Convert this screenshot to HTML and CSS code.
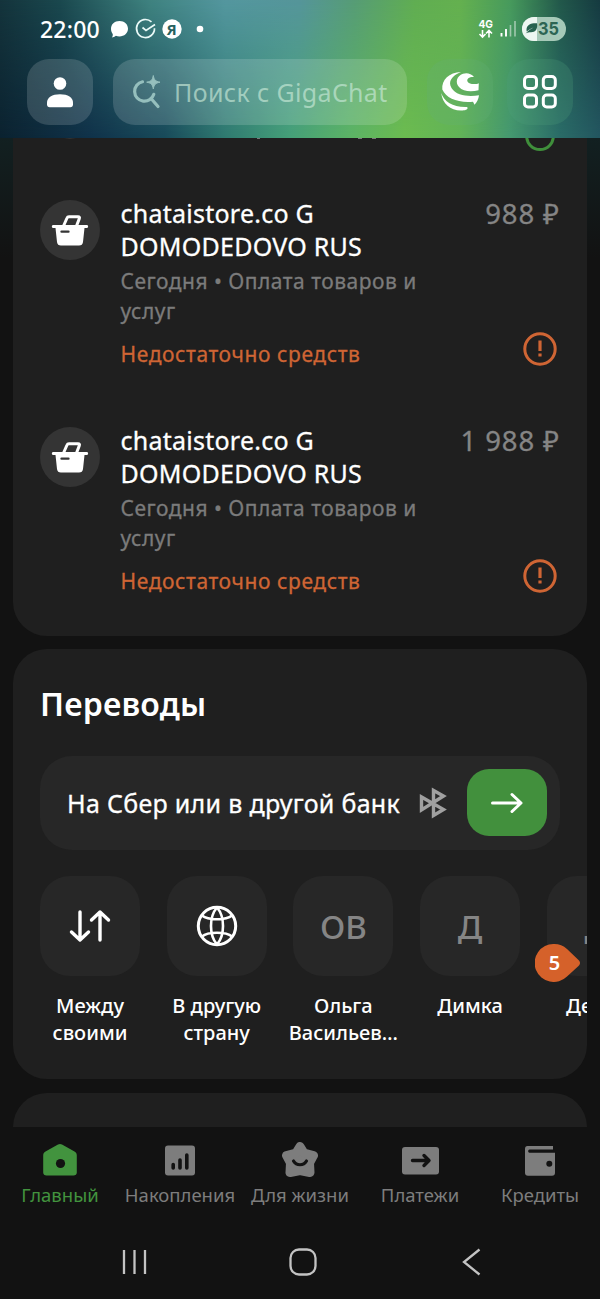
FILE: index.html
```html
<!DOCTYPE html>
<html lang="ru">
<head>
<meta charset="utf-8">
<title>Главный</title>
<link rel="stylesheet" href="styles.css">
</head>
<body>
<header class="header">
  <div class="status">
    <span class="clock">22:00</span>
    <svg class="status-icons" width="100" height="24" viewBox="110 17 100 24">
      <path d="M119.500 21c5 0 8.500 3.400 8.500 7.700 0 4.400-3.700 7.700-8.500 7.700-1.500 0-2.600-.2-3.600-.6-1.500 1.100-2.600 1.700-4.100 1.700.9-1.200 1.200-2.500.9-3.600-1.100-1.400-1.700-3.200-1.700-5.200 0-4.300 3.500-7.700 8.500-7.700z" fill="#fff"/>
      <path d="M151.500 21.800a9 9 0 1 0 3 6.500M142.500 27.500l3.500 3 9-6" fill="none" stroke="#eafaf8" stroke-width="1.700"/>
      <circle cx="172" cy="29" r="9.700" fill="#fff"/>
      <text x="171.500" y="34.500" text-anchor="middle" class="ya">Я</text>
      <circle cx="200" cy="29" r="3.300" fill="#fff"/>
    </svg>
    <svg class="signal" width="90" height="28" viewBox="477 15 90 28">
      <text x="478.500" y="27.500" class="g4" textLength="14.500" lengthAdjust="spacingAndGlyphs">4G</text>
      <path d="M482.500 30v7m-3-3 3 3.200 3-3.200M489 37.500v-7m-3 3 3-3.200 3 3.200" fill="none" stroke="#fff" stroke-width="1.600"/>
      <path d="M501.500 33v3.500M506 29v7.500" stroke="#fff" stroke-width="1.900"/>
      <path d="M510.500 25v11.500M515 21v15.500" stroke="#a1c9ae" stroke-width="1.600"/>
      <clipPath id="pill"><rect x="522" y="17" width="44" height="24" rx="12"/></clipPath>
      <g clip-path="url(#pill)"><path d="M522 17h44v24h-44z" fill="#a6c9b8"/><path d="M522 17h15v24h-15z" fill="#edf6f1"/></g>
      <path d="M525.500 33.500c2-1 3.500-1.200 5.500-1.200 4.500 0 7-3.300 6-9-6-.3-10.500 1.500-10.500 6.500 0 .8.100 1.300.3 1.800 2-2.200 4-3.200 6.700-4.200-3 1.500-5.500 3.300-8 6.100z" fill="#27624f"/>
      <text x="538" y="35.400" class="batt" textLength="21" lengthAdjust="spacingAndGlyphs">35</text>
    </svg>
  </div>
  <div class="toolbar">
    <div class="tool tool-user">
      <svg width="66" height="66" viewBox="27 59 66 66"><circle cx="60" cy="83.500" r="6.300" fill="#fff"/><path d="M47 102.500c0-4.800 5-8.200 13-8.200s13 3.400 13 8.200v2c0 1.600-1 2.700-2.700 2.700H49.700c-1.700 0-2.700-1.100-2.700-2.700z" fill="#fff"/></svg>
    </div>
    <div class="search">
      <svg width="30" height="34" viewBox="132 74 30 34"><path d="M142.500 80.800a9.800 9.800 0 1 0 11.300 12.500M151.500 98l6.500 7.500" fill="none" stroke="#95bfbd" stroke-width="3.200" stroke-linecap="round"/><path d="M153.300 74.500c.9 4.600 2 5.700 6.700 6.700-4.700 1-5.800 2.100-6.700 6.700-.9-4.600-2-5.700-6.600-6.700 4.600-1 5.700-2.100 6.600-6.700z" fill="#95bfbd" stroke="#95bfbd"/></svg>
      <span class="placeholder">Поиск с GigaChat</span>
    </div>
    <div class="tool tool-giga">
      <svg width="66" height="66" viewBox="427 59 66 66">
        <g fill="#fff">
          <path d="M461 72C449 72.300 441.500 80 442.300 89.500c4 9 15.700 13.500 30.700 12.200l1.500 3c2.500-2.500 4-5.700 4.500-9.400-9 1.300-22.500 1.200-27.500-7.300-4-6.500.5-12.500 9.500-16z"/>
          <path d="M474 77c-3-4-7.500-4.500-11-3.300-6.500 2.300-8 8.800-4 13.300s12 5 19.500 3.200l.3-7c-3.300 1.500-9.800 1.300-11.300-1.700-1-2.500 1.500-4.700 6.500-4.500z"/>
          <path d="M441.200 93c3 9 12 14.500 25.800 14 1.500 1.500 0 3-3 3.300-12 1.500-21.500-5.500-22.800-17.300z"/>
        </g>
      </svg>
    </div>
    <div class="tool tool-apps">
      <svg width="66" height="66" viewBox="507 59 66 66"><g fill="none" stroke="#fff" stroke-width="3"><rect x="524.500" y="76.500" width="12" height="12" rx="3.500"/><rect x="543.300" y="76.500" width="12" height="12" rx="3.500"/><rect x="524.500" y="95" width="12" height="12" rx="3.500"/><rect x="543.300" y="95" width="12" height="12" rx="3.500"/></g></svg>
    </div>
  </div>
</header>

<main class="feed">
  <section class="card history">
    <svg class="cut-row" width="574" height="20" viewBox="13 138 574 20"><circle cx="540" cy="136.300" r="13.300" fill="none" stroke="#3f8f3b" stroke-width="3"/><path d="M64 138h12l-6 .9z" fill="#333"/><path d="M257 138.500h3M358 138.500h4M372 138.500h4" stroke="#777"/></svg>
    <article class="tx">
      <svg class="tx-icon" width="60" height="60" viewBox="0 0 60 60"><circle cx="30" cy="30" r="30" fill="#343434"/><path d="M13 25h34c1.500 0 1.500 3 0 3h-2.500l-1.500 14c-.3 2.500-1.600 3.500-4 3.500H21c-2.400 0-3.700-1-4-3.500L15.500 28H13c-1.500 0-1.500-3 0-3z" fill="#fff"/><path d="M23.500 26l3.500-8c.4-1 1-1.300 2-1.300h9c1.400 0 1.800.9 1.300 2L36.500 26" fill="none" stroke="#fff" stroke-width="3"/><path d="M21.500 31.700h7" stroke="#343434" stroke-width="2.300" stroke-linecap="round"/></svg>
      <div class="tx-text">
        <div class="tx-title">chataistore.co G<br>DOMODEDOVO RUS</div>
        <div class="tx-sub">Сегодня • Оплата товаров и<br>услуг</div>
        <div class="tx-error">Недостаточно средств</div>
      </div>
      <div class="tx-side">
        <span class="sum">988 ₽</span>
        <svg width="36" height="36" viewBox="0 0 36 36"><circle cx="18" cy="18" r="15.200" fill="none" stroke="#cf6534" stroke-width="3"/><path d="M18 9.500v10.500M18 22.500v3" stroke="#cf6534" stroke-width="3.200"/></svg>
      </div>
    </article>
    <article class="tx">
      <svg class="tx-icon" width="60" height="60" viewBox="0 0 60 60"><circle cx="30" cy="30" r="30" fill="#343434"/><path d="M13 25h34c1.500 0 1.500 3 0 3h-2.500l-1.500 14c-.3 2.500-1.600 3.500-4 3.500H21c-2.400 0-3.700-1-4-3.500L15.500 28H13c-1.500 0-1.500-3 0-3z" fill="#fff"/><path d="M23.500 26l3.500-8c.4-1 1-1.300 2-1.300h9c1.400 0 1.800.9 1.300 2L36.500 26" fill="none" stroke="#fff" stroke-width="3"/><path d="M21.500 31.700h7" stroke="#343434" stroke-width="2.300" stroke-linecap="round"/></svg>
      <div class="tx-text">
        <div class="tx-title">chataistore.co G<br>DOMODEDOVO RUS</div>
        <div class="tx-sub">Сегодня • Оплата товаров и<br>услуг</div>
        <div class="tx-error">Недостаточно средств</div>
      </div>
      <div class="tx-side">
        <span class="sum">1 988 ₽</span>
        <svg width="36" height="36" viewBox="0 0 36 36"><circle cx="18" cy="18" r="15.200" fill="none" stroke="#cf6534" stroke-width="3"/><path d="M18 9.500v10.500M18 22.500v3" stroke="#cf6534" stroke-width="3.200"/></svg>
      </div>
    </article>
  </section>

  <section class="card transfers">
    <h2 class="heading">Переводы</h2>
    <div class="bank">
      <span class="bank-label">На Сбер или в другой банк</span>
      <svg width="28" height="32" viewBox="419 787 28 32"><path d="M421.500 797v13l22-14-10-5.500v25l10-6z" fill="none" stroke="#a0a0a0" stroke-width="3.400"/></svg>
      <div class="go"><svg width="34" height="24" viewBox="0 0 34 24"><path d="M2.500 12h28M22 3.500l9 8.500-9 8.500" fill="none" stroke="#fff" stroke-width="3" stroke-linecap="round" stroke-linejoin="round"/></svg></div>
    </div>
    <div class="contacts">
      <div class="contact"><div class="tile"><svg width="44" height="44" viewBox="0 0 44 44"><path d="M12 8v28M3.500 28l8.500 8 8.500-8M32 36V8M23.500 16l8.500-8 8.500 8" fill="none" stroke="#fff" stroke-width="3.400" stroke-linecap="round" stroke-linejoin="round"/></svg></div><span>Между<br>своими</span></div>
      <div class="contact"><div class="tile"><svg width="44" height="44" viewBox="0 0 44 44"><g fill="none" stroke="#fff"><circle cx="22" cy="22" r="18.700" stroke-width="3"/><path d="M22 3.500c-8 9-8 28 0 37M22 3.500c8 9 8 28 0 37M7 11.500c6 5 24 5 30 0M7 32.500c6-5 24-5 30 0" stroke-width="2.600"/></g></svg></div><span>В другую<br>страну</span></div>
      <div class="contact"><div class="tile">ОВ</div><span>Ольга<br>Васильев…</span></div>
      <div class="contact"><div class="tile">Д</div><span>Димка</span></div>
      <div class="contact"><div class="tile">Д</div><span>Денис</span></div>
    </div>
    <svg class="pin" width="46" height="38" viewBox="535 944 46 38"><path d="M554 944a19 19 0 1 0 13 32.500l11.500-10.500c2-1.800 2-4.200 0-6L567 949a19 19 0 0 0-13-5z" fill="#d5612a"/><text x="554.500" y="969.800" text-anchor="middle" class="pin-num">5</text></svg>
  </section>

  <section class="card next"></section>
</main>

<nav class="tabs">
  <div class="tab active"><svg width="40" height="40" viewBox="0 0 40 40"><path d="M18 3.500c1.500-.8 2.500-.8 4 0l12.500 7c1.500.8 2.300 2 2.300 4v17c0 2-1.300 3-3.300 3h-27c-2 0-3.300-1-3.300-3v-17c0-2 .8-3.200 2.300-4z" fill="#42933e"/><circle cx="20.500" cy="22.500" r="4.600" fill="#121212"/></svg><span>Главный</span></div>
  <div class="tab"><svg width="40" height="40" viewBox="0 0 40 40"><rect x="5" y="4.500" width="30" height="30" rx="3" fill="#7d7d7d"/><path d="M13.200 23.500v3.500M20 19v8M26.800 14v13" stroke="#121212" stroke-width="3.600" stroke-linecap="round"/></svg><span>Накопления</span></div>
  <div class="tab"><svg width="40" height="40" viewBox="0 0 40 40"><path d="M20 5.500l4 6.500 9.500 2.500-4 7.500.5 9.500L20 29.500l-10 2 .5-9.500-4-7.500L16 12z" fill="#7d7d7d" stroke="#7d7d7d" stroke-width="9" stroke-linejoin="round"/><path d="M13.500 20c3 5 10 5 13 0" fill="none" stroke="#121212" stroke-width="3.200" stroke-linecap="round"/></svg><span>Для жизни</span></div>
  <div class="tab"><svg width="40" height="40" viewBox="0 0 40 40"><rect x="2" y="6" width="37" height="27.500" rx="3" fill="#7d7d7d"/><path d="M12.500 19.500H28M24 14.500l5 5-5 5" fill="none" stroke="#121212" stroke-width="3.400" stroke-linecap="round" stroke-linejoin="round"/></svg><span>Платежи</span></div>
  <div class="tab"><svg width="40" height="40" viewBox="0 0 40 40"><path d="M7.500 5H33v3.500H9.500c-1.700 0-1.700 3.200 0 3.200H35v20c0 2-1 3-3 3H8c-2 0-3-1-3-3V8c0-2 .8-3 2.500-3z" fill="#7d7d7d"/><circle cx="29.300" cy="22.700" r="3" fill="#121212"/></svg><span>Кредиты</span></div>
</nav>
<footer class="system">
  <svg width="26" height="28" viewBox="0 0 26 28"><path d="M2 2v24M12.500 2v24M23 2v24" stroke="#c3c3c3" stroke-width="2.300"/></svg>
  <svg class="home" width="28" height="28" viewBox="0 0 28 28"><rect x="1.500" y="1.500" width="25" height="25" rx="8.500" fill="none" stroke="#c3c3c3" stroke-width="2.300"/></svg>
  <svg width="20" height="28" viewBox="0 0 20 28"><path d="M17.500 1.500L2 14l15.500 12.500" fill="none" stroke="#c3c3c3" stroke-width="2.300"/></svg>
</footer>
</body>
</html>
```

FILE: styles.css
```css
* { box-sizing: border-box; }
body {
  margin: 0; width: 600px; height: 1299px; overflow: hidden;
  display: flex; flex-direction: column;
  background: #121212; color: #fff;
  font-family: "Noto Sans", "Open Sans", sans-serif; font-weight: 500;
}
svg { display: block; flex: none; }

.header {
  height: 138px; flex: none; padding: 15px 27px 0;
  position: relative; isolation: isolate;
  background: linear-gradient(90deg, #0b2230 0, #10324a 90px, #184a5a 165px, #2f7a70 225px, #45a078 290px, #5cb466 350px, #6cbc50 405px, #62b458 460px, #459870 510px, #2a6c68 560px, #235660 600px);
}
/* upper colours of the aurora, fading into the lower ones */
.header::before {
  content: ""; position: absolute; inset: 0; z-index: -1;
  background: linear-gradient(90deg, #14343c 0, #1a484e 60px, #3f8380 150px, #54979f 225px, #55959a 300px, #569c75 355px, #60ad52 415px, #64b04f 460px, #479a5c 510px, #22584a 560px, #153a40 600px);
  -webkit-mask-image: linear-gradient(#000, transparent);
  mask-image: linear-gradient(#000, transparent);
}
.status { display: flex; height: 28px; padding-left: 13px; }
.clock { width: 70px; font-size: 23px; line-height: 28px; font-weight: 500; letter-spacing: .2px; }
.status-icons { margin-top: 2px; }
.signal { margin-left: auto; margin-right: 6px; }
.ya { font: 700 15px "Noto Sans", sans-serif; fill: #27625f; }
.g4 { font: 700 11px Inter, sans-serif; fill: #fff; }
.batt { font: 700 18px Inter, sans-serif; fill: #2d6553; }
.toolbar { display: flex; margin-top: 16px; }
.tool { width: 66px; height: 66px; border-radius: 22px; flex: none; }
.tool-user { background: rgba(255,255,255,.15); }
.tool-giga { margin-left: 20px; background: rgba(100,175,120,.25); }
.tool-apps { margin-left: 14px; background: rgba(80,160,125,.25); }
.search { width: 294px; height: 66px; margin-left: 20px; padding-left: 19px; border-radius: 22px; background: rgba(255,255,255,.15); display: flex; align-items: center; }
.placeholder { margin-left: 12px; font-size: 25px; font-weight: 400; line-height: 36px; white-space: nowrap; letter-spacing: .35px; color: rgba(200,232,215,.66); }

.feed { flex: none; height: 989px; overflow: hidden; padding: 0 13px; display: flex; flex-direction: column; gap: 13px; background: linear-gradient(#122021 0, #121212 120px); }
.card { background: #1f1f1f; border-radius: 34px; flex: none; }
.history { height: 498px; border-radius: 0 0 34px 34px; padding: 0 27px; }
.cut-row { margin: 0 -27px 38px; }
.tx { display: flex; height: 172px; margin-bottom: 55px; }
.tx-icon { margin-top: 3.500px; }
.tx-text { margin-left: 20.500px; padding-top: 1px; flex: 1; white-space: nowrap; }
.tx-title { font-size: 25px; line-height: 33px; font-weight: 450; letter-spacing: .25px; -webkit-text-stroke: .3px; }
.tx-sub { margin-top: 3px; font-size: 21px; line-height: 30px; color: #7b7b7b; font-weight: 450; letter-spacing: .5px; -webkit-text-stroke: .3px; }
.tx-error { margin-top: 13px; font-size: 21px; line-height: 30px; color: #cf6534; font-weight: 450; letter-spacing: .6px; -webkit-text-stroke: .3px; }
.tx-side { display: flex; flex-direction: column; align-items: flex-end; justify-content: space-between; padding-bottom: 1px; }
.tx-side svg { margin-right: 2px; }
.sum { font-size: 27.500px; line-height: 35px; color: #858585; white-space: nowrap; letter-spacing: .9px; font-weight: 450; -webkit-text-stroke: .3px; }

.transfers { height: 430px; overflow: hidden; position: relative; padding: 32.500px 27px 0; }
.heading { margin: 0; font-size: 32px; line-height: 44px; font-weight: 600; letter-spacing: .2px; }
.bank { height: 93.500px; margin-top: 30.500px; border-radius: 32px; background: #272727; display: flex; align-items: center; padding: 0 13px 0 27px; }
.bank-label { width: 352px; font-size: 25px; line-height: 34px; white-space: nowrap; font-weight: 450; letter-spacing: .3px; -webkit-text-stroke: .3px; }
.go { width: 80px; height: 67px; border-radius: 22px; margin-left: auto; background: #42903d; display: flex; align-items: center; justify-content: center; }
.contacts { display: flex; gap: 26.700px; margin-top: 26.500px; }
.contact { width: 100px; flex: none; display: flex; flex-direction: column; align-items: center; font-size: 20px; line-height: 27px; text-align: center; white-space: nowrap; }
.tile { width: 100px; height: 100px; border-radius: 30px; background: #272727; display: flex; align-items: center; justify-content: center; margin-bottom: 16px; color: #858585; font-size: 33px; }
.pin { position: absolute; left: 522px; top: 295px; }
.pin-num { font: 600 20px "Noto Sans", sans-serif; fill: #fff; }
.next { height: 80px; margin-top: 1px; }

.tabs { flex: none; height: 98px; padding-top: 14px; display: flex; background: #121212; }
.tab { width: 120px; display: flex; flex-direction: column; align-items: center; color: #7d7d7d; font-size: 18.500px; line-height: 25px; font-weight: 450; white-space: nowrap; gap: 1px; }
.active { color: #42933e; }
.system { height: 74px; flex: none; padding: 23px 118px 0 122px; display: flex; align-items: flex-start; justify-content: space-between; }
.home { margin-right: 4px; }
```
